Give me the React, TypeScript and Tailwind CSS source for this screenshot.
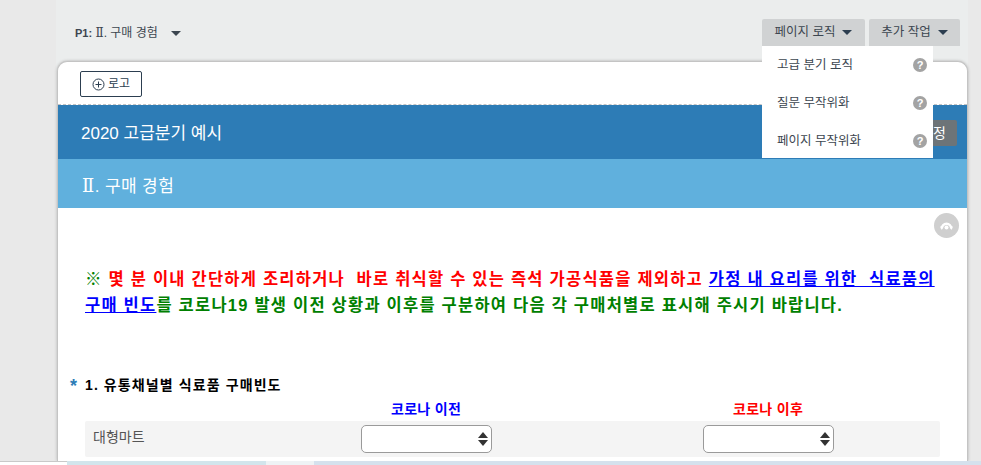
import React from "react";

const font = { fontFamily: '"Liberation Sans", "Noto Sans CJK KR", sans-serif' };

function Caret({ className }: { className: string }) {
  return <span className={`inline-block w-0 h-0 border-x-[5.5px] border-x-transparent border-t-[5.5px] ${className}`} />;
}

function Help() {
  return (
    <span className="w-[14px] h-[14px] rounded-full bg-[#a3a3a3] text-white text-[11px] font-bold leading-[14px] text-center">?</span>
  );
}

function Item({ label }: { label: string }) {
  return (
    <div className="h-[38px] pl-[15px] pr-[6px] flex items-center justify-between text-[12.5px] text-[#3c4650]">
      <span>{label}</span>
      <Help />
    </div>
  );
}

function Select() {
  return (
    <div className="w-[131px] h-[28px] bg-white border border-[#9a9a9a] rounded-[5px] flex items-center justify-end pr-[3px]">
      <span className="flex flex-col gap-[2px]">
        <span className="w-0 h-0 border-x-[5px] border-x-transparent border-b-[6px] border-b-[#333]" />
        <span className="w-0 h-0 border-x-[5px] border-x-transparent border-t-[6px] border-t-[#333]" />
      </span>
    </div>
  );
}

export default function App() {
  return (
    <div style={font} className="relative w-[981px] h-[465px] overflow-hidden bg-[#e9e9e9]">
      <div className="ml-[56px] mr-[13px] h-[461px] bg-[#ebeded] flex flex-col">
        <div className="h-[61px] shrink-0 flex items-start justify-between pl-[19px] pr-[8px]">
          <div className="mt-[24px] flex items-center gap-[13px] text-[12px] text-[#3c4650]">
            <span>
              <b className="text-[11px]">P1:</b> <span className="font-['DejaVu_Serif'] text-[12px]">Ⅱ</span>. 구매 경험
            </span>
            <Caret className="border-t-[#3c4650]" />
          </div>
          <div className="relative mt-[19px] flex gap-[4px]">
            <div className="w-[103px] h-[27px] bg-[#d0d2d3] rounded-t-[2px] flex items-center justify-center gap-[7px] text-[12.5px] text-[#3c4650]">
              페이지 로직 <Caret className="border-t-[#2c3e50]" />
            </div>
            <div className="w-[91px] h-[27px] bg-[#d0d2d3] rounded-t-[2px] flex items-center justify-center gap-[7px] text-[12.5px] text-[#3c4650]">
              추가 작업 <Caret className="border-t-[#2c3e50]" />
            </div>
            <div className="absolute z-10 left-0 top-[27px] w-[171px] h-[112px] bg-white">
              <Item label="고급 분기 로직" />
              <Item label="질문 무작위화" />
              <Item label="페이지 무작위화" />
            </div>
          </div>
        </div>
        <div className="ml-[1px] flex-1 min-h-0 bg-white rounded-t-[10px] border border-b-0 border-[#c4c4c4] shadow-[0_0_3px_#aaa] flex flex-col overflow-hidden">
          <div className="h-[43px] shrink-0 pl-[22px] pt-[9px] border-b border-dashed border-[#c4c4c4]">
            <button className="w-[62px] h-[26px] border border-[#2c3e50] rounded-[2px] flex items-center justify-center gap-[3px] text-[12px] text-[#2c3e50]">
              <svg width="13" height="13" viewBox="0 0 13 13" fill="none" stroke="#2c3e50" strokeWidth="1">
                <circle cx="6.5" cy="6.5" r="5.5" />
                <path d="M6.5 3.5v6M3.5 6.5h6" />
              </svg>
              로고
            </button>
          </div>
          <div className="h-[54px] shrink-0 bg-[#2d7cb6] flex items-center justify-between pl-[23px] pr-[10px] pt-[3px] text-white">
            <span className="text-[17px]">2020 고급분기 예시</span>
            <span className="w-[60px] h-[26px] -mt-[2px] bg-[#6d7478] rounded-[2px] text-[14px] leading-[26px] text-right pr-[11px]">정</span>
          </div>
          <div className="h-[49px] shrink-0 bg-[#60b0dd] flex items-center pl-[24px] pt-[5px] text-[17px] tracking-[0.4px] text-white">
            <span>
              <span className="font-['DejaVu_Serif'] text-[18px]">Ⅱ</span>. 구매 경험
            </span>
          </div>
          <div className="relative flex-1 pl-[27px] pr-[27px]">
            <div className="absolute right-[8px] top-[5px] w-[25px] h-[25px] rounded-full bg-[#cfcfcf] flex items-center justify-center">
              <svg width="13" height="8" viewBox="0 0 13 8" fill="none">
                <path d="M1.800 6.500a4.700 4.700 0 0 1 9.400 0" stroke="white" strokeWidth="2.400" />
                <circle cx="6.500" cy="5.500" r="2" fill="white" />
                <path d="M0 4.500h3.500L1.800 8zM9.500 4.500H13L11.300 8z" fill="white" />
              </svg>
            </div>
            <p className="mt-[58px] text-[16.5px] tracking-[1.22px] leading-[26px] font-bold text-[#008000] whitespace-nowrap">
              ※ <span className="text-[#ff0000]">몇 분 이내 간단하게 조리하거나&nbsp; 바로 취식할 수 있는 즉석 가공식품을 제외하고</span>{" "}
              <span className="text-[#0000ff] underline">가정 내 요리를 위한&nbsp; 식료품의</span>
              <br />
              <span className="text-[#0000ff] underline">구매 빈도</span>를 코로나19 발생 이전 상황과 이후를 구분하여 다음 각 구매처별로 표시해 주시기 바랍니다.
            </p>
            <div className="relative mt-[59px] text-[14px] tracking-[1.1px] leading-[16px] font-bold text-black">
              <span className="absolute left-[-15px] top-[1px] text-[#2d7cb6] text-[18px]">*</span>
              1. 유통채널별 식료품 구매빈도
            </div>
            <div className="grid grid-cols-[262px_342px_1fr] mt-[7px] text-[14px] tracking-[0.3px] font-bold leading-[18px]">
              <span />
              <span className="text-[#0000ff] pl-[44px]">코로나 이전</span>
              <span className="text-[#ff0000] pl-[44px]">코로나 이후</span>
            </div>
            <div className="mt-[3px] h-[36px] bg-[#f4f4f4] rounded-[2px] grid grid-cols-[268px_342px_1fr] items-center pl-[8px] text-[14px] text-[#555]">
              <span className="pb-[4px]">대형마트</span>
              <Select />
              <Select />
            </div>
          </div>
        </div>
      </div>
      <div className="h-[4px] flex">
        <div className="w-[67px] bg-white border-t border-[#c9c9c9]" />
        <div className="w-[199px] bg-[#d2e5ec]" />
        <div className="w-[48px] bg-[#eef3f5]" />
        <div className="flex-1 bg-[#d5e1ed]" />
      </div>
    </div>
  );
}
